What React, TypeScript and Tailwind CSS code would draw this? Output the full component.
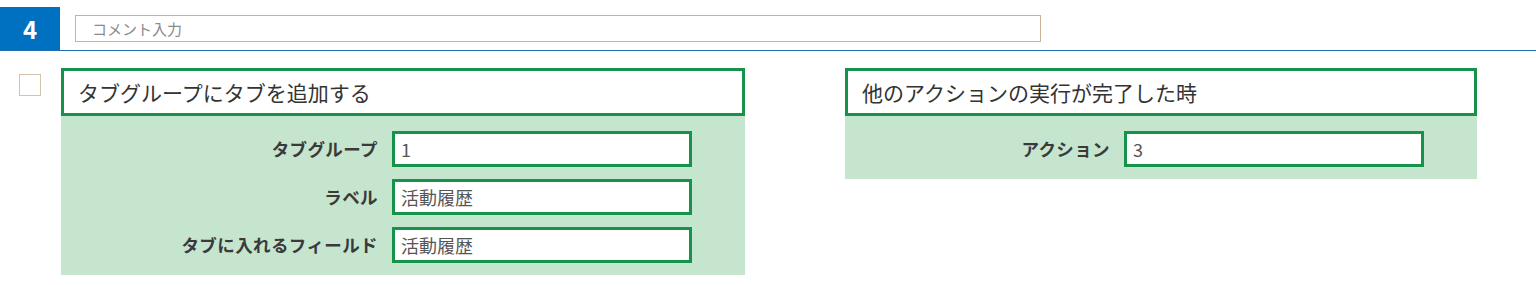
import { type ReactNode } from "react";

const jp = "font-['Noto_Sans_CJK_JP','Noto_Sans',sans-serif]";

interface Field {
  label: string;
  value: string;
}

function FieldRow({ field, labelWidth }: { field: Field; labelWidth: string }) {
  return (
    <div className="flex items-center">
      <div
        className={`${labelWidth} shrink-0 pr-[14px] text-right text-[17.5px] font-bold leading-none text-[#3a3a3a] tracking-[0.4px]`}
      >
        {field.label}
      </div>
      <div className="flex h-[36px] w-[300px] items-center border-[3px] border-[#16924a] bg-white px-[6px] text-[18px] leading-none text-[#555]">
        {field.value}
      </div>
    </div>
  );
}

function Card({
  title,
  width,
  labelWidth,
  fields,
}: {
  title: ReactNode;
  width: string;
  labelWidth: string;
  fields: Field[];
}) {
  return (
    <div className={`${width} shrink-0`}>
      <div className="flex h-[48px] items-center border-[3px] border-[#16924a] bg-white pl-[14px] text-[21px] leading-none text-[#333]">
        {title}
      </div>
      <div className="flex flex-col gap-[12px] bg-[#c5e5cf] pb-[12px] pt-[15px]">
        {fields.map((f) => (
          <FieldRow key={f.label} field={f} labelWidth={labelWidth} />
        ))}
      </div>
    </div>
  );
}

export default function App() {
  return (
    <div className={`h-[285px] w-[1536px] bg-white ${jp}`}>
      {/* ステップ番号 + コメント */}
      <div className="flex items-center border-b border-[#1f6fae] pt-[7px]">
        <div className="flex h-[43px] w-[60px] items-center justify-center bg-[#0070c0] text-[24px] font-bold text-white">
          4
        </div>
        <div className="ml-[15px] flex h-[27px] w-[966px] items-center border border-[#cbb295] pl-[16px] text-[15px] leading-none text-[#8a8a8a]">
          コメント入力
        </div>
      </div>

      <div className="mt-[17px] flex items-start">
        <div className="ml-[19px] mt-[6px] h-[22px] w-[22px] shrink-0 border-[1.5px] border-[#d6c2ab] bg-white" />
        <div className="ml-[20px]">
          <Card
            title="タブグループにタブを追加する"
            width="w-[684px]"
            labelWidth="w-[331px]"
            fields={[
              { label: "タブグループ", value: "1" },
              { label: "ラベル", value: "活動履歴" },
              { label: "タブに入れるフィールド", value: "活動履歴" },
            ]}
          />
        </div>
        <div className="ml-[100px]">
          <Card
            title="他のアクションの実行が完了した時"
            width="w-[632px]"
            labelWidth="w-[279px]"
            fields={[{ label: "アクション", value: "3" }]}
          />
        </div>
      </div>
    </div>
  );
}
